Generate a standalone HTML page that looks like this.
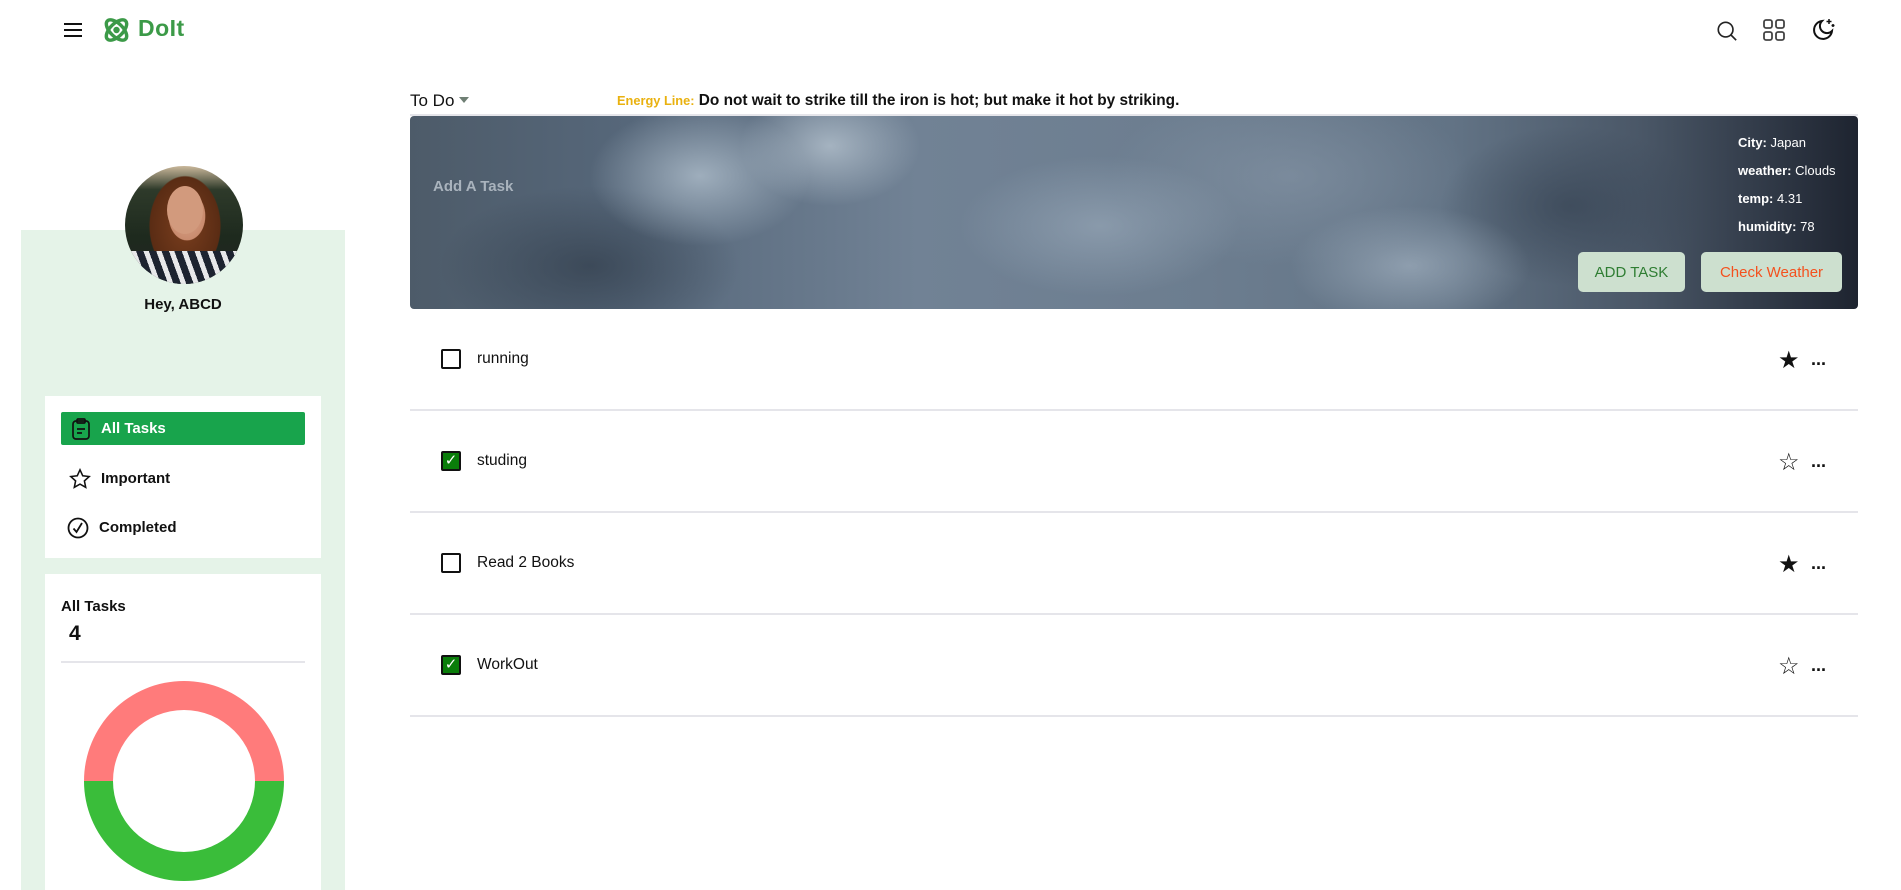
<!DOCTYPE html>
<html><head><meta charset="utf-8"><style>
*{box-sizing:border-box;margin:0;padding:0}
body{width:1901px;height:890px;overflow:hidden;background:#fff;font-family:"Liberation Sans",sans-serif;color:#111;position:relative}
.abs{position:absolute}
.ham{left:64px;top:23px;width:18px;height:14px;border-top:2px solid #111;border-bottom:2px solid #111}
.ham:after{content:"";position:absolute;left:0;top:4px;width:18px;height:2px;background:#111}
.logo{left:138px;top:15px;font-size:23px;font-weight:bold;color:#3c9a48;letter-spacing:0.5px}
.side{left:21px;top:230px;width:324px;height:660px;background:#e5f3e8}
.avatar{left:125px;top:166px;width:118px;height:118px;border-radius:50%;overflow:hidden;background:radial-gradient(ellipse 30px 40px at 62px 50px,#d9a48a 0,#c98b6e 60%,transparent 62%),radial-gradient(ellipse 50px 70px at 60px 60px,#7a3e1e 0,#5a2c14 70%,transparent 72%),linear-gradient(180deg,#c9b79a 0,#2e3a2a 20%,#1e2a1e 60%,#222 100%)}
.stripes{left:0;top:85px;width:118px;height:40px;background:repeating-linear-gradient(70deg,#1d2330 0 7px,#e8e8ea 7px 12px)}
.hey{left:21px;top:296px;width:324px;text-align:center;font-size:15px;font-weight:bold}
.card{left:45px;width:276px;background:#fff}
.item{position:absolute;left:16px;width:244px;height:33px;font-size:15px;font-weight:bold;display:flex;align-items:center}
.item svg{margin-left:10px;margin-right:10px}
.active{background:#18a44c;color:#fff;border-radius:2px}
.todo{left:410px;top:91px;font-size:17px}
.tri{display:inline-block;width:0;height:0;border-left:5px solid transparent;border-right:5px solid transparent;border-top:6px solid #6f7f74;margin-left:5px;vertical-align:3px}
.energy{left:617px;top:92px;font-size:15.4px;font-weight:bold}
.energy span{color:#e9b10f;font-size:12.8px}
.hline{left:410px;top:114px;width:1448px;height:2px;background:#e5e5ea}
.banner{left:410px;top:116px;width:1448px;height:193px;border-radius:4px;overflow:hidden;
background:
radial-gradient(ellipse 110px 70px at 290px 60px,rgba(180,195,208,.75),transparent),
radial-gradient(ellipse 90px 60px at 420px 30px,rgba(190,203,214,.7),transparent),
radial-gradient(ellipse 140px 70px at 690px 110px,rgba(160,176,192,.55),transparent),
radial-gradient(ellipse 120px 60px at 1000px 150px,rgba(170,185,200,.6),transparent),
radial-gradient(ellipse 150px 80px at 180px 150px,rgba(50,62,76,.7),transparent),
radial-gradient(ellipse 130px 80px at 1160px 90px,rgba(55,68,84,.7),transparent),
radial-gradient(ellipse 180px 90px at 880px 60px,rgba(140,155,172,.5),transparent),
linear-gradient(90deg,#4d5b69 0,#56677a 15%,#718295 35%,#6c7d8f 55%,#627385 72%,#4a5767 85%,#1e2430 100%)}
.addtask{left:433px;top:178px;font-size:15px;font-weight:bold;color:#a9b3bd}
.wx{left:1738px;font-size:13px;color:#fff}
.wx b{font-weight:bold}
.btn{top:252px;height:40px;background:#cde0cf;border-radius:5px;font-size:15px;display:flex;align-items:center;justify-content:center}
.row{left:410px;width:1448px;height:2px;background:#e5e5ea}
.cb{left:441px;width:20px;height:20px;border:2px solid #111;border-radius:2px}
.cb.on{background:#0a7d0a;color:#fff;font-size:15px;line-height:16px;text-align:center}
.tt{left:477px;font-size:15.5px}
.star{left:1778px;font-size:24px;line-height:24px}
.dots{left:1811px;font-size:18px;font-weight:bold;line-height:20px}
</style></head><body>
<div class="abs ham"></div>
<svg class="abs" style="left:102px;top:15px" width="29" height="30" viewBox="0 0 26 28"><g fill="none" stroke="#3c9a48" stroke-width="3.2"><ellipse cx="13" cy="14" rx="12" ry="6" transform="rotate(45 13 14)"/><ellipse cx="13" cy="14" rx="12" ry="6" transform="rotate(-45 13 14)"/></g><circle cx="13" cy="14" r="3" fill="#3c9a48"/></svg>
<div class="abs logo">DoIt</div>
<svg class="abs" style="left:1716px;top:20px" width="22" height="22" viewBox="0 0 24 24" fill="none" stroke="#222" stroke-width="1.8"><circle cx="10.5" cy="10.5" r="8"/><path d="M16.5 16.5L22 22"/></svg>
<svg class="abs" style="left:1763px;top:19px" width="22" height="22" viewBox="0 0 22 22" fill="none" stroke="#444" stroke-width="1.8"><rect x="1" y="1" width="8" height="8" rx="2"/><rect x="13" y="1" width="8" height="8" rx="2"/><rect x="1" y="13" width="8" height="8" rx="2"/><rect x="13" y="13" width="8" height="8" rx="2"/></svg>
<svg class="abs" style="left:1811px;top:17px" width="25" height="25" viewBox="0 0 25 25" fill="none" stroke="#111" stroke-width="2"><path d="M11 4A9 9 0 1 0 21 14A7 7 0 0 1 11 4Z"/><path d="M18 2v5M15.5 4.5h5M22 7v3M20.5 8.5h3" stroke-width="1.5"/></svg>

<div class="abs side"></div>
<div class="abs avatar"><div class="abs stripes"></div><div class="abs" style="left:42px;top:20px;width:36px;height:48px;border-radius:50%;background:#d29a7d"></div></div>
<div class="abs hey">Hey, ABCD</div>
<div class="abs card" style="top:396px;height:162px">
 <div class="item active" style="top:16px"><svg width="20" height="22" viewBox="0 0 20 22" fill="none" stroke="#111" stroke-width="1.7"><rect x="2" y="3" width="16" height="18" rx="3"/><rect x="6" y="1" width="8" height="4" rx="1"/><path d="M6 11h8M6 15h5"/></svg>All Tasks</div>
 <div class="item" style="top:66px;left:14px"><svg width="22" height="22" viewBox="0 0 24 24" fill="none" stroke="#111" stroke-width="1.7"><path d="M12 2l3 6.5 7 .8-5.2 4.8 1.4 7L12 17.6 5.8 21.1l1.4-7L2 9.3l7-.8z"/></svg>Important</div>
 <div class="item" style="top:115px;left:12px"><svg width="22" height="22" viewBox="0 0 22 22" fill="none" stroke="#111" stroke-width="1.8"><circle cx="11" cy="11" r="9.5"/><path d="M6.5 11.5l3 3.5 5.5-9"/></svg>Completed</div>
</div>
<div class="abs card" style="top:574px;height:316px">
 <div class="abs" style="left:16px;top:24px;font-size:15px;font-weight:bold">All Tasks</div>
 <div class="abs" style="left:24px;top:48px;font-size:21px;font-weight:bold">4</div>
 <div class="abs" style="left:16px;top:87px;width:244px;height:2px;background:#e5e5ea"></div>
 <svg class="abs" style="left:38px;top:106px" width="202" height="202" viewBox="0 0 202 202"><path d="M1 101A100 100 0 0 1 201 101H172A71 71 0 0 0 30 101Z" fill="#ff7b7b"/><path d="M1 101A100 100 0 0 0 201 101H172A71 71 0 0 1 30 101Z" fill="#3abd3a"/></svg>
</div>

<div class="abs todo">To Do<span class="tri"></span></div>
<div class="abs energy"><span>Energy Line:</span> Do not wait to strike till the iron is hot; but make it hot by striking.</div>
<div class="abs hline"></div>
<div class="abs banner"></div>
<div class="abs addtask">Add A Task</div>
<div class="abs wx" style="top:135px"><b>City:</b> Japan</div>
<div class="abs wx" style="top:163px"><b>weather:</b> Clouds</div>
<div class="abs wx" style="top:191px"><b>temp:</b> 4.31</div>
<div class="abs wx" style="top:219px"><b>humidity:</b> 78</div>
<div class="abs btn" style="left:1578px;width:107px;color:#2e7d32">ADD TASK</div>
<div class="abs btn" style="left:1701px;width:141px;color:#f4511e">Check Weather</div>

<div class="abs cb" style="top:349px"></div><div class="abs tt" style="top:350px">running</div>
<div class="abs star" style="top:349px">★</div><div class="abs dots" style="top:349px">...</div>
<div class="abs row" style="top:409px"></div>
<div class="abs cb on" style="top:451px">✓</div><div class="abs tt" style="top:452px">studing</div>
<div class="abs star" style="top:451px">☆</div><div class="abs dots" style="top:451px">...</div>
<div class="abs row" style="top:511px"></div>
<div class="abs cb" style="top:553px"></div><div class="abs tt" style="top:554px">Read 2 Books</div>
<div class="abs star" style="top:553px">★</div><div class="abs dots" style="top:553px">...</div>
<div class="abs row" style="top:613px"></div>
<div class="abs cb on" style="top:655px">✓</div><div class="abs tt" style="top:656px">WorkOut</div>
<div class="abs star" style="top:655px">☆</div><div class="abs dots" style="top:655px">...</div>
<div class="abs row" style="top:715px"></div>
</body></html>
